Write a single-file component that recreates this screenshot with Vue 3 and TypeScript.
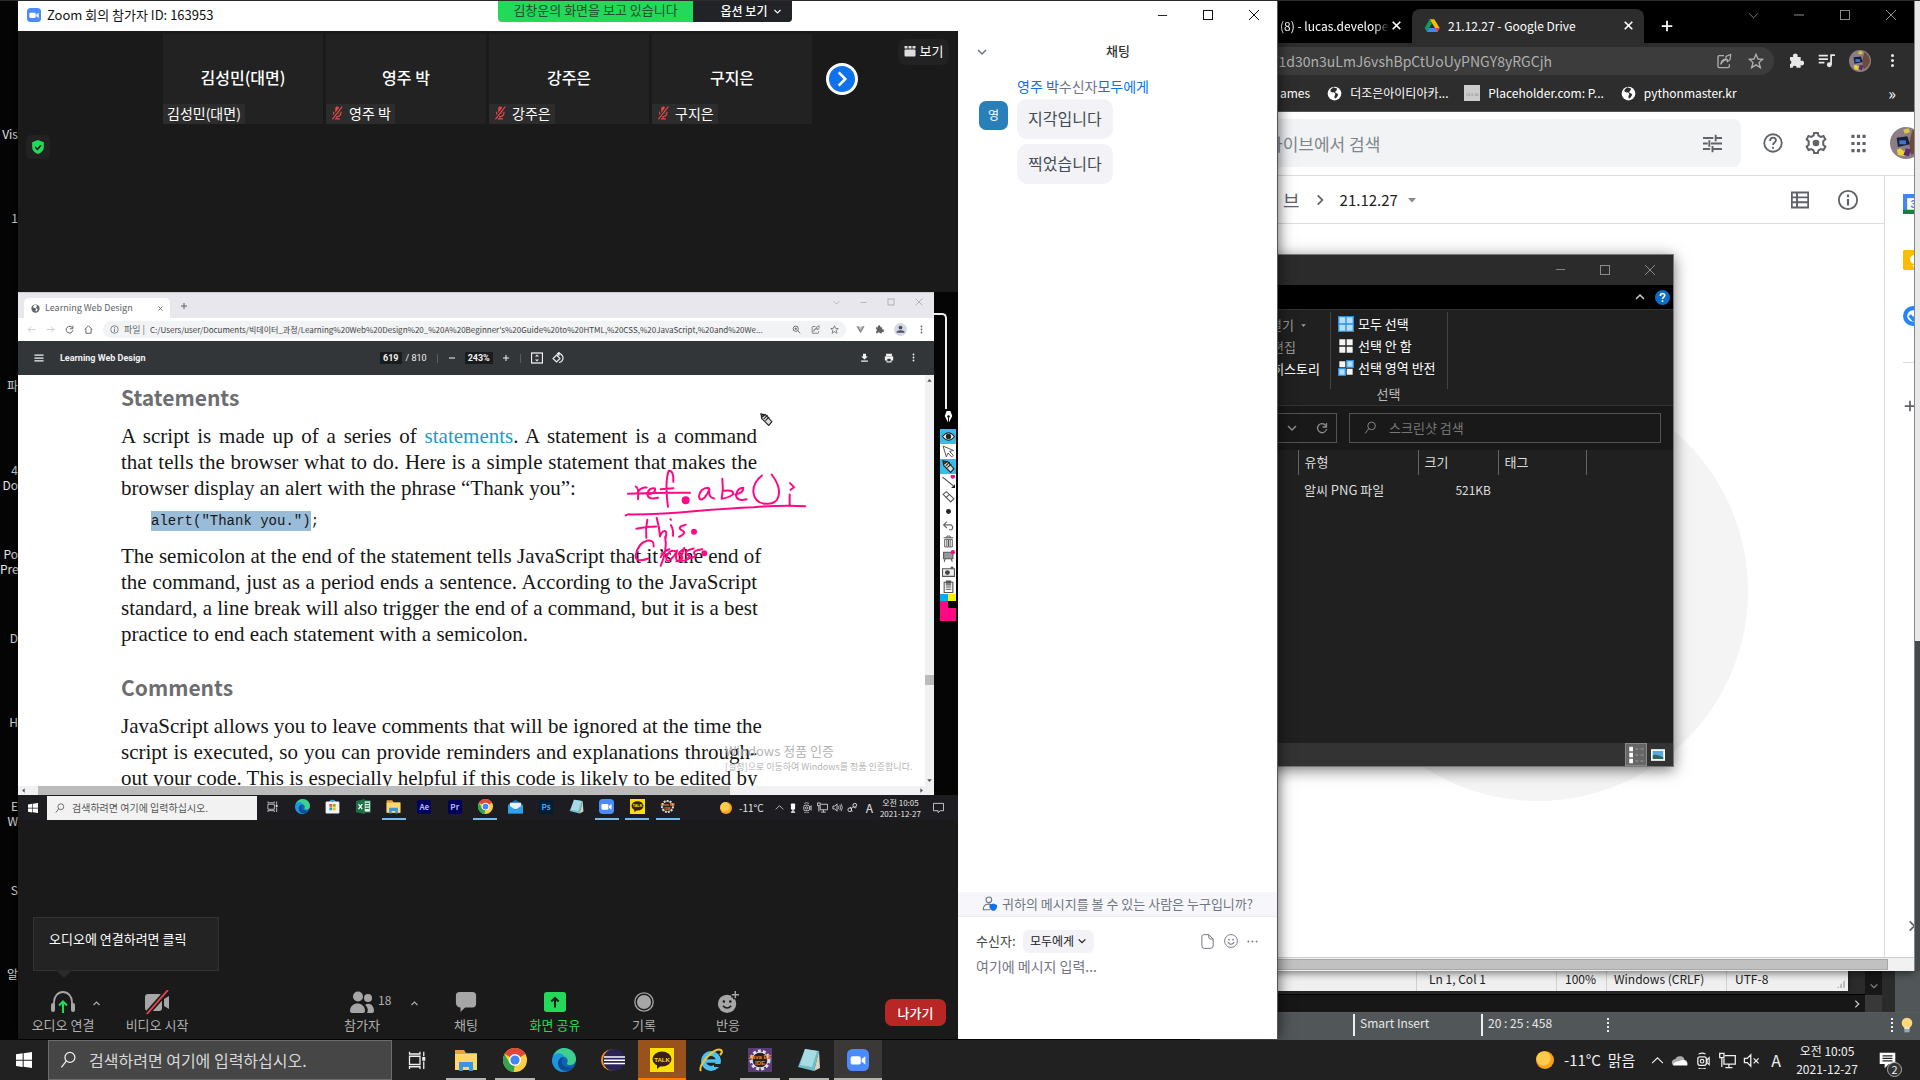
<script setup lang="ts">
import { h, type FunctionalComponent } from 'vue'

const chev = (d: string, w = 2) =>
  `<path d="${d}" fill="none" stroke="currentColor" stroke-width="${w}"/>`
const gear = '<circle cx="12" cy="12" r="7" fill="#222"/><circle cx="12" cy="12" r="9" fill="none" stroke="#ddd" stroke-width="3" stroke-dasharray="3 2"/><circle cx="12" cy="12" r="8" fill="none" stroke="#ddd" stroke-width="1"/>'

const glyphs: Record<string, string> = {
  zoom: '<rect width="24" height="24" rx="6" fill="#4a8cff"/><rect x="4" y="8" width="11" height="9" rx="2" fill="#fff"/><path d="M16 11l4-3v9l-4-3z" fill="#fff"/>',
  min: chev('M2 12h20'),
  max: '<rect x="3" y="3" width="18" height="18" fill="none" stroke="currentColor" stroke-width="2"/>',
  close: chev('M2 2l20 20M22 2L2 22'),
  x: chev('M5 5l14 14M19 5L5 19', 3),
  down: chev('M4 8l8 8 8-8', 3),
  up: chev('M4 16l8-8 8 8', 3),
  right: chev('M8 4l8 8-8 8', 3),
  thindown: chev('M2 7l10 10L22 7'),
  thinup: chev('M2 17l10-10 10 10'),
  caret: '<path d="M4 8h16l-8 9z" fill="currentColor"/>',
  caretup: '<path d="M4 16h16l-8-9z" fill="currentColor"/>',
  caretleft: '<path d="M16 4v16l-9-8z" fill="currentColor"/>',
  caretright: '<path d="M8 4v16l9-8z" fill="currentColor"/>',
  plus: chev('M12 3v18M3 12h18', 3),
  minus: chev('M3 12h18', 3),
  dots: '<circle cx="12" cy="4" r="2.4" fill="currentColor"/><circle cx="12" cy="12" r="2.4" fill="currentColor"/><circle cx="12" cy="20" r="2.4" fill="currentColor"/>',
  hdots: '<circle cx="3" cy="12" r="2" fill="currentColor"/><circle cx="12" cy="12" r="2" fill="currentColor"/><circle cx="21" cy="12" r="2" fill="currentColor"/>',
  muted: '<rect x="9" y="1" width="7" height="13" rx="3.500" fill="#e8474c"/><path d="M6 10q0 8 6.500 8t6.500-8M12 18v4M8 22h9" fill="none" stroke="#e8474c" stroke-width="2"/><path d="M20 1L4 23" stroke="#2b2b2b" stroke-width="5"/><path d="M21 1L4 23" stroke="#e8474c" stroke-width="2"/>',
  grid: '<path d="M1 2h6v5H1zM9 2h6v5H9zM17 2h6v5h-6z" fill="#ddd"/><rect x="1" y="9" width="22" height="14" rx="2" fill="#ddd"/>',
  shield: '<path d="M12 0l10 4v8c0 6-4 10-10 12C6 22 2 18 2 12V4z" fill="#23d959"/><path d="M7 12l4 4 6-7" fill="none" stroke="#1a1a1a" stroke-width="2.5"/>',
  globe: '<circle cx="12" cy="12" r="11" fill="currentColor"/><path d="M10 2c-2 3-6 3-4 7 3 2 6 0 7 3s-3 4 0 8c3-1 3-3 5-6-1-3-4-2-5-4 1-3 3-2 3-6z" fill="var(--hole,#fff)"/>',
  back: chev('M22 12H3M11 4l-8 8 8 8'),
  fwd: chev('M2 12h19M13 4l8 8-8 8'),
  reload: '<path d="M20 8a9 9 0 1 0 1 6M21 2v8h-8" fill="none" stroke="currentColor" stroke-width="2.6"/>',
  home: chev('M2 12L12 2l10 10M5 10v12h14V10', 2.5),
  info: '<circle cx="12" cy="12" r="10" fill="none" stroke="currentColor" stroke-width="2"/><path d="M12 11v7M12 6v3" stroke="currentColor" stroke-width="2.4"/>',
  search: '<circle cx="14" cy="9" r="7" fill="none" stroke="currentColor" stroke-width="1.8"/><path d="M9 14l-7 9" stroke="currentColor" stroke-width="1.8"/>',
  zoomin: '<circle cx="10" cy="10" r="7" fill="none" stroke="currentColor" stroke-width="2.4"/><path d="M15 15l7 7M10 7v6M7 10h6" stroke="currentColor" stroke-width="2.4"/>',
  share: '<path d="M12 4H5a2 2 0 0 0-2 2v14a2 2 0 0 0 2 2h13a2 2 0 0 0 2-2v-3" fill="none" stroke="currentColor" stroke-width="2"/><path d="M7 17c1-6 4-8 8-8V5l7-3v1l-1 7-4 3v-3c-4 0-7 2-10 7z" fill="none" stroke="currentColor" stroke-width="1.8"/>',
  star: '<path d="M12 2l3 7 7 .6-5.500 4.800L18.500 22 12 17.800 5.500 22l2-7.600L2 9.600 9 9z" fill="none" stroke="currentColor" stroke-width="2"/>',
  vue: '<path d="M1 3h5l6 10 6-10h5L12 22z" fill="#888"/><path d="M6 3h4l2 4 2-4h4l-6 10z" fill="#bbb"/>',
  puzzle: '<path d="M3 6h5a3.500 3.500 0 1 1 6 0h5v6a3.500 3.500 0 1 1 0 6v4h-6a3 3 0 0 0-6 0H3v-5a3.200 3.200 0 0 0 0-6z" fill="currentColor"/>',
  person: '<circle cx="12" cy="12" r="12" fill="#d5d8e0"/><circle cx="12" cy="8.500" r="3.500" fill="#4a5168"/><path d="M4.500 18c0-6 15-6 15 0z" fill="#4a5168"/>',
  menu: chev('M1 5h22M1 12h22M1 19h22', 3),
  fit: '<rect x="1" y="2" width="22" height="20" fill="none" stroke="currentColor" stroke-width="2.500"/><path d="M12 5l4 4H8zM12 19l4-4H8z" fill="currentColor"/>',
  rotate: '<path d="M9 6l7 7-7 7-7-7z M12 3a9 9 0 0 1 2 18M15 0l-4 3.500 4 3.500" fill="none" stroke="currentColor" stroke-width="2.400"/>',
  download: '<path d="M8 2h8v7h5l-9 8-9-8h5zM3 20h18v3H3z" fill="currentColor"/>',
  print: '<path d="M5 2h14v5H5zM2 8h20v10h-4v5H6v-5H2z" fill="currentColor"/><path d="M8 14h8v6H8z" fill="#323639"/>',
  win: '<path d="M0 3.500l10-1.500v9.500H0zM11.500 1.800L24 0v11.500H11.500zM0 13h10v9.500L0 21zM11.500 13H24v11l-12.500-1.800z" fill="#fff"/>',
  taskview: '<path d="M2 7h14v11H2zM2 1v3h14V1M2 24v-3h14v3M21 1v6M21 14v10" fill="none" stroke="currentColor" stroke-width="1.700"/><rect x="19" y="8" width="4" height="5" fill="currentColor"/>',
  edge: '<circle cx="12" cy="12" r="12" fill="#0c65b8"/><path d="M1 9C3 2 9 0 12 0c7 0 12 5 12 11 0 4-3 6-6 6-4 0-3-2-2.500-3 1-4-3-6-6-5.500S3 6 1 9z" fill="#3ccf8e"/><path d="M0 12C2 4 9 4 12 8c-5 2-6 10 3 15C6 26 0 19 0 12z" fill="#1a97e0"/><path d="M12 9c-5 4-1 13 9 10-5 6-15 5-15-4 0-3 2-6 6-6z" fill="#0b4c93"/>',
  store: '<path d="M8 5c0-4 8-4 8 0" fill="none" stroke="#38a7e8" stroke-width="2"/><rect x="1" y="4" width="22" height="19" rx="2" fill="#f3f3f3"/><path d="M7 8h4.500v4.500H7z" fill="#f25022"/><path d="M12.500 8H17v4.500h-4.500z" fill="#7fba00"/><path d="M7 13.500h4.500V18H7z" fill="#00a4ef"/><path d="M12.500 13.500H17V18h-4.500z" fill="#ffb900"/>',
  excel: '<path d="M11 3h12v18H11z" fill="#e9f5ee" stroke="#1d7044" stroke-width="1.500"/><path d="M15 7h6M15 11h6M15 15h6" stroke="#1d7044" stroke-width="2"/><path d="M0 3l14-3v24L0 21z" fill="#1d7044"/><path d="M4 8l6 8M10 8l-6 8" stroke="#fff" stroke-width="2"/>',
  folder: '<path d="M1 2h9l2 3h11v17H1z" fill="#e8a33d"/><path d="M1 6h22v16H1z" fill="#ffd869"/><path d="M5 23v-9h14v9h-4v-4H9v4z" fill="#3c96dc"/>',
  chrome: '<circle cx="12" cy="12" r="12" fill="#fdd044"/><path d="M12 12L1.600 6A12 12 0 0 1 22.400 6z" fill="#e2463a"/><path d="M1.600 6L7 16l5 .5L10.500 24A12 12 0 0 1 1.600 6z" fill="#31a350"/><circle cx="12" cy="12" r="6" fill="#fff"/><circle cx="12" cy="12" r="4.600" fill="#4285f4"/>',
  mail: '<path d="M0 9L12 1l12 8v14H0z" fill="#0f6fc5"/><path d="M3 6h18v10H3z" fill="#e6f3fc"/><path d="M0 9l12 8 12-8v14H0z" fill="#2ea2ea"/>',
  notepad: '<path d="M8 1l14 2-5 20L1 19z" fill="#6fbecb"/><path d="M8 1l12 2-5 16L3 17z" fill="#a8dce4"/><path d="M22 3l1 17-6 3z" fill="#d8d2c0"/>',
  talk: '<rect width="24" height="24" fill="#fae100"/><ellipse cx="12" cy="11" rx="9.500" ry="7.500" fill="#3b1e1e"/><path d="M7 15v6l5-4z" fill="#3b1e1e"/><text x="12" y="13.500" font-size="6" font-weight="700" text-anchor="middle" fill="#fae100" font-family="Liberation Sans, sans-serif">TALK</text>',
  javaee: `<rect width="24" height="24" fill="var(--tile,#5b3b7a)"/>${gear}<text x="12" y="11" font-size="6" font-weight="700" text-anchor="middle" fill="#f58220" font-family="Liberation Sans, sans-serif">Java EE</text><text x="12" y="17" font-size="6" font-weight="700" text-anchor="middle" fill="#f58220" font-family="Liberation Sans, sans-serif">IDE</text>`,
  eclipse: '<circle cx="10.500" cy="12" r="10.500" fill="#f7941e"/><circle cx="13" cy="12" r="11" fill="#2c2255"/><path d="M3 9h21M3 12.300h21M3 15.500h21" stroke="#fff" stroke-width="1.600"/>',
  ie: '<circle cx="12" cy="13" r="7.500" fill="none" stroke="#4cc1f0" stroke-width="5"/><path d="M7 13h14" stroke="#4cc1f0" stroke-width="3.500"/><path d="M15 16h9v3h-9z" fill="#222"/><path d="M2 23C-2 18 15-1 22 2c2 2 0 4-1 5" fill="none" stroke="#f3c52c" stroke-width="2"/>',
  sun: '<circle cx="12" cy="12" r="12" fill="#f9a11b"/><circle cx="10" cy="10" r="9.500" fill="#ffcb4d"/>',
  mic: '<rect x="7" y="1" width="10" height="15" rx="2" fill="#fff"/><path d="M12 16v7M7 22h10" stroke="#fff" stroke-width="3"/>',
  cam: '<rect x="4" y="7" width="12" height="12" rx="3" fill="none" stroke="currentColor" stroke-width="1.800"/><circle cx="10" cy="13" r="2.500" fill="none" stroke="currentColor" stroke-width="1.600"/><path d="M20 8l-3 3v4l3 3zM5 3q5-3 10 0M5 23q5 2 10 0" fill="none" stroke="currentColor" stroke-width="1.600"/>',
  net: '<path d="M8 5h15v12H7V9M14 17v5M9 22h10" fill="none" stroke="currentColor" stroke-width="1.800"/><path d="M1 2h6v6H1zM4 8v13" fill="none" stroke="currentColor" stroke-width="1.800"/>',
  vol: '<path d="M2 9h4l5-5v16l-5-5H2z" fill="none" stroke="currentColor" stroke-width="1.800"/><path d="M14 9q2 3 0 6M17 6q4 6 0 12M20 4q5 8 0 16" fill="none" stroke="currentColor" stroke-width="1.600"/>',
  volx: '<path d="M2 9h4l5-5v16l-5-5H2zM15 9l7 7M22 9l-7 7" fill="none" stroke="currentColor" stroke-width="1.800"/>',
  link: '<circle cx="6" cy="17" r="4" fill="none" stroke="currentColor" stroke-width="2"/><circle cx="17" cy="7" r="4" fill="none" stroke="currentColor" stroke-width="2"/><path d="M6 12c8-2 0 10 6 8M10 14c4-8 8 2 10-2" fill="none" stroke="currentColor" stroke-width="2"/>',
  cloud: '<path d="M2 18q-3-6 4-8 2-5 8-4 4 0 5 5 5 1 4 7z" fill="#aaa"/><path d="M3 19q0-5 7-6l7-2q7 2 6 8z" fill="#fff"/>',
  note: '<path d="M1 3h22v16h-7l-5 4v-4H1z" fill="none" stroke="currentColor" stroke-width="1.800"/>',
  notefull: '<path d="M1 1h22v16h-9l-6 6v-6H1z" fill="#fff"/><path d="M5 5.500h14M5 9h14M5 12.500h14" stroke="#202020" stroke-width="1.500"/>',
  headset: '<path d="M3 16V12a9 10 0 0 1 18 0v4" fill="none" stroke="#a6a6a6" stroke-width="1.800"/><rect x="0" y="13" width="4" height="9" rx="2" fill="#a6a6a6"/><rect x="20" y="13" width="4" height="9" rx="2" fill="#a6a6a6"/><path d="M12 23V12M8 15.500l4-4 4 4" fill="none" stroke="#23d959" stroke-width="2"/>',
  video: '<rect x="0" y="4" width="17" height="17" rx="3" fill="#a6a6a6"/><path d="M19 9l5-3v13l-5-3z" fill="#a6a6a6"/><path d="M23 0L1 25" stroke="#1a1a1a" stroke-width="5"/><path d="M23 0L1 25" stroke="#e8474c" stroke-width="1.800"/>',
  people: '<circle cx="8" cy="6.500" r="5" fill="#a6a6a6"/><path d="M0 21c0-10 15-10 15 0q0 2-2 2H2q-2 0-2-2z" fill="#a6a6a6"/><circle cx="18" cy="8" r="4" fill="#a6a6a6"/><path d="M17 23c2-3 0-7-2-8 4-3 9 0 9 6q0 2-2 2z" fill="#a6a6a6"/>',
  chat: '<path d="M5 1h14q4 0 4 4v9q0 4-4 4h-8l-5 5v-5q-4 0-5-4V5q0-4 4-4z" fill="#a6a6a6"/>',
  sharescr: '<rect width="24" height="22" y="1" rx="3" fill="#23d959"/><path d="M12 18V8M8 11.500l4-4 4 4" fill="none" stroke="#1a1a1a" stroke-width="2.200"/>',
  record: '<circle cx="12" cy="12" r="11" fill="none" stroke="#a6a6a6" stroke-width="1.600"/><circle cx="12" cy="12" r="8.500" fill="#a6a6a6"/>',
  react: '<circle cx="11" cy="14" r="10" fill="#a6a6a6"/><circle cx="7.500" cy="11.500" r="1.400" fill="#1a1a1a"/><circle cx="14.500" cy="11.500" r="1.400" fill="#1a1a1a"/><path d="M6.500 16q4.500 5 9 0" fill="none" stroke="#1a1a1a" stroke-width="1.600"/><path d="M20 0v9M15.500 4.500h9" stroke="#1a1a1a" stroke-width="5"/><path d="M20 0v8M16 4h8" stroke="#a6a6a6" stroke-width="1.600"/>',
  whosees: '<circle cx="11" cy="6" r="4.500" fill="none" stroke="#6e7680" stroke-width="1.800"/><path d="M13 22H2q0-9 8-9 4 0 6 2" fill="none" stroke="#6e7680" stroke-width="1.800"/><path d="M18 12l6 2.500v4q-1 4-6 5.500-5-1.500-6-5.500v-4z" fill="#0e72ed"/>',
  file: '<path d="M6 1h8l7 7v11q0 4-4 4H7q-4 0-4-4V5q0-4 3-4zM14 1v4q0 3 3 3h4" fill="none" stroke="currentColor" stroke-width="1.600"/>',
  smile: '<circle cx="12" cy="12" r="11" fill="none" stroke="currentColor" stroke-width="1.600"/><circle cx="8.500" cy="9.500" r="1.500" fill="currentColor"/><circle cx="15.500" cy="9.500" r="1.500" fill="currentColor"/><path d="M6.500 14q5.500 7 11 0" fill="none" stroke="currentColor" stroke-width="1.800"/>',
  drive: '<path d="M8.500 2h7l8 13h-7z" fill="#fbbc04"/><path d="M8.500 2L1 15l3.500 6L12 8z" fill="#0f9d58"/><path d="M4.500 21L8 15h15.500L20 21z" fill="#4285f4"/><path d="M17 15h6.500L20 21z" fill="#ea4335"/>',
  playlist: '<path d="M1 5h13M1 10h13M1 15h8" stroke="currentColor" stroke-width="2.400"/><circle cx="16" cy="18" r="3.500" fill="currentColor"/><path d="M18.500 18V4.500H24" fill="none" stroke="currentColor" stroke-width="2.400"/>',
  photo: '<circle cx="12" cy="12" r="12" fill="#8c7d86"/><path d="M17 2q5 4 6 10-2 7-7 9-3-8 1-19z" fill="#6d4b38"/><path d="M5 8l8-1 2 6-9 2z" fill="#16223c"/><path d="M7 10h5v3H7z" fill="#3f76c9"/><path d="M5 17l3-1 2 2 3-1-2 5-5-1z" fill="#e6d43c"/><path d="M10 2l4-1 1 3-4 1z" fill="#d9c940"/><path d="M12 16l4 1-2 5-4-1z" fill="#5a2c74"/>',
  tune: '<path d="M0 5h13M17 5h7M16 1v8M0 12h6M10 12h14M8 8v8M0 19h9M13 19h11M12 15v8" stroke="currentColor" stroke-width="2.400"/>',
  help: '<circle cx="12" cy="12" r="10.500" fill="none" stroke="currentColor" stroke-width="2.200"/><path d="M8.500 9.500q0-4 3.500-4t3.500 3.300c0 2.500-3.500 2.700-3.500 5.700M12 16.500v2.500" fill="none" stroke="currentColor" stroke-width="2.200"/>',
  gear: '<path d="M10 1h4l.7 3 2.500 1.400 3-1 2 3.500-2.300 2.100v4l2.300 2.100-2 3.500-3-1-2.500 1.400-.7 3h-4l-.7-3-2.500-1.400-3 1-2-3.500L4 14v-4L1.800 7.900l2-3.500 3 1L9.300 4z" fill="none" stroke="currentColor" stroke-width="2.200"/><circle cx="12" cy="12" r="3.600" fill="currentColor"/>',
  apps: '<path d="M3 1h4v4H3zM10 1h4v4h-4zM17 1h4v4h-4zM3 10h4v4H3zM10 10h4v4h-4zM17 10h4v4h-4zM3 19h4v4H3zM10 19h4v4h-4zM17 19h4v4h-4z" fill="currentColor"/>',
  list: '<path d="M1 2h22v20H1zM1 8.500h22M1 15h22M8 2v20" fill="none" stroke="currentColor" stroke-width="2.600"/>',
  calendar: '<path d="M0 0h24v24H0z" fill="#4285f4"/><path d="M5 5h16v14H5z" fill="#fff"/><path d="M0 19h24v5H0z" fill="#188038"/><text x="9" y="17" font-size="12" font-weight="700" fill="#4285f4" font-family="Roboto, sans-serif">31</text>',
  keep: '<rect width="24" height="24" rx="2" fill="#fbbc04"/><circle cx="14" cy="11" r="5.500" fill="#fff"/><path d="M12 18h5v2h-5z" fill="#fff"/>',
  tasks: '<circle cx="12" cy="12" r="9.500" fill="none" stroke="#2684fc" stroke-width="5"/><path d="M8 11l4 5 9-9" fill="none" stroke="#2684fc" stroke-width="4"/>',
  qmark: '<circle cx="12" cy="12" r="12" fill="#0b6cc9"/><path d="M8.500 9.500q0-4 3.500-4t3.500 3.300c0 2.500-3.500 2.700-3.500 5.700M12 16.500v2.800" fill="none" stroke="#fff" stroke-width="2.600"/>',
  selall: '<path d="M0 0h24v24H0z" fill="#2a8de0"/><path d="M2 2h9v9H2zM13 2h9v9h-9zM2 13h9v9H2zM13 13h9v9h-9z" fill="#b5dfff"/>',
  selnone: '<path d="M2 2h9v9H2zM13 2h9v9h-9zM2 13h9v9H2zM13 13h9v9h-9z" fill="#f4f4f4"/>',
  selinv: '<path d="M12 0h12v12H12zM0 12h12v12H0z" fill="#2a8de0"/><path d="M2 2h9v9H2zM13 13h9v9h-9z" fill="#f4f4f4"/><path d="M14 2h8v8h-8zM2 14h8v8H2z" fill="#b5dfff"/>',
  details: '<path d="M3 1h5v6H3zM3 9h5v6H3zM3 17h5v6H3z" fill="#fff"/><path d="M11 4h4M18 4h4M11 12h4M18 12h4M11 20h4M18 20h4" stroke="#999" stroke-width="1.500"/>',
  thumbs: '<path d="M0 2h24v20H0z" fill="#fff"/><path d="M3 5h18v14H3z" fill="#5aa7e6"/><path d="M3 12q8-2 18 4v3H3z" fill="#2e6b58"/>',
  bulb: '<circle cx="12" cy="9" r="8" fill="#ffd87a"/><path d="M8 15h8v3H8z" fill="#f7e6b0"/><path d="M8 18h8v5H8z" fill="#8fa9c4"/>',
  pen: '<circle cx="12" cy="12" r="12" fill="#000"/><path d="M12 23L6 11l3-8h6l3 8z" fill="#fff"/><path d="M12 23v-9" stroke="#000" stroke-width="1.500"/><circle cx="12" cy="12" r="2" fill="#000"/>',
  eye: '<path d="M1 12q11-14 22 0-11 14-22 0z" fill="#fff" stroke="#222" stroke-width="2"/><circle cx="12" cy="12" r="5" fill="#222"/>',
  arrow: '<path d="M2 2l19 8-7 2 7 7-3 3-7-7-3 7z" fill="#fff" stroke="#555" stroke-width="1.800"/>',
  pencil: '<path d="M2 2l8 1 12 13-6 7L3 10z" fill="#ddd" stroke="#222" stroke-width="2"/><path d="M2 2l3 5 3-3zM7 11l7-7M10 14l7-7" fill="none" stroke="#222" stroke-width="2"/>',
  line: '<path d="M1 4l20 16" stroke="#444" stroke-width="2"/><circle cx="20" cy="3" r="4" fill="#ff0a84"/><path d="M24 17v7h-7z" fill="#222"/>',
  eraser: '<path d="M2 8l6-5 14 13-6 6z" fill="#fff" stroke="#555" stroke-width="2"/><path d="M7 14l7-6" stroke="#555" stroke-width="2"/>',
  dot: '<circle cx="12" cy="12" r="4.500" fill="#222"/>',
  undo: '<path d="M9 3L3 9l6 6M3 9h14q5 4 1 9h-5" fill="none" stroke="#666" stroke-width="2.200"/>',
  trash: '<path d="M3 5h18M9 5V2h6v3M5 8h14v14H5zM9 9v12M12 9v12M15 9v12" fill="none" stroke="#555" stroke-width="1.800"/>',
  board: '<path d="M3 4h17v12H3zM6 16l-2 6M17 16l2 6" fill="#999" stroke="#555" stroke-width="2"/><circle cx="20" cy="4" r="4" fill="#ff0a84"/>',
  camera: '<path d="M1 7h22v14H1z" fill="#eee" stroke="#555" stroke-width="2"/><circle cx="10" cy="14" r="4.500" fill="#444"/><path d="M16 3h5v4h-5z" fill="#555"/>',
  clip: '<path d="M4 4h16v19H4zM7 9h10M7 13h10M7 17h10M8 2h8v4H8z" fill="none" stroke="#555" stroke-width="2"/>',
}

const Icon: FunctionalComponent<{ n: string; s?: number; t?: number }> = (p) =>
  h('svg', {
    viewBox: '0 0 24 24',
    width: p.s ?? 16,
    height: p.t ?? p.s ?? 16,
    class: 'icon',
    'aria-hidden': 'true',
    innerHTML: glyphs[p.n],
  })
Icon.props = ['n', 's', 't']

const desktopLabels = ['Vis', '1', '', '파', '4\nDo', 'Po\nPre', 'D', 'H', 'E\nW', 'S', '알']

const participants = [
  { name: '김성민(대면)', muted: false },
  { name: '영주 박', muted: true },
  { name: '강주은', muted: true },
  { name: '구지은', muted: true },
]

const innerApps = [
  { n: 'taskview' }, { n: 'edge' }, { n: 'store' }, { n: 'excel' }, { n: 'folder', on: true },
  { n: '', label: 'Ae', c: 'ae' }, { n: '', label: 'Pr', c: 'ae' }, { n: 'chrome', on: true },
  { n: 'mail' }, { n: '', label: 'Ps', c: 'ps' }, { n: 'notepad' }, { n: 'zoom', on: true },
  { n: 'talk', on: true }, { n: 'javaee', on: true },
] as { n: string; label?: string; c?: string; on?: boolean }[]

const apps = [
  { n: 'taskview', s: 18, title: '작업 보기' },
  { n: 'folder', s: 24, on: true, title: '파일 탐색기' },
  { n: 'chrome', s: 24, on: true, title: 'Chrome' },
  { n: 'edge', s: 24, title: 'Edge' },
  { n: 'eclipse', s: 24, title: 'Eclipse' },
  { n: 'talk', s: 24, c: 'alert', title: '카카오톡' },
  { n: 'ie', s: 24, title: 'Internet Explorer' },
  { n: 'javaee', s: 24, on: true, title: 'Java EE IDE' },
  { n: 'notepad', s: 24, on: true, title: '메모장' },
  { n: 'zoom', s: 22, c: 'active', title: 'Zoom' },
] as { n: string; s: number; title: string; on?: boolean; c?: string }[]

const inkTools = ['eye', 'arrow', 'pencil', 'line', 'eraser', 'dot', 'undo', 'trash', 'board', 'camera', 'clip']
</script>

<template>
  <div class="desktop">
    <main class="workspace">
      <ul class="labels">
        <li v-for="(l, i) in desktopLabels" :key="i">{{ l }}</li>
      </ul>

      <!-- Eclipse, furthest back -->
      <section class="win eclipse">
        <div class="ecl-editor">
          <div class="ecl-canvas"></div>
          <div class="ecl-v"><Icon n="down" :s="10" /></div>
          <div class="ecl-gap"></div>
        </div>
        <div class="ecl-h">
          <div class="ecl-track"><Icon n="right" :s="10" /></div>
          <div class="ecl-corner"></div>
          <div class="ecl-gap"></div>
        </div>
        <footer class="ecl-status">
          <span class="ecl-cell a">Smart Insert</span>
          <span class="ecl-cell b">20 : 25 : 458</span>
          <span class="grip"></span>
          <span class="grip end"></span>
          <Icon n="bulb" :s="16" />
        </footer>
      </section>

      <section class="win notepad">
        <span class="np a">Ln 1, Col 1</span>
        <span class="np b">100%</span>
        <span class="np c">Windows (CRLF)</span>
        <span class="np d">UTF-8</span>
        <i class="resize"></i>
      </section>

      <!-- Chrome with Google Drive -->
      <section class="win chrome">
        <div class="tabs">
          <div class="tab old"><span>(8) - lucas.develope</span><Icon n="x" :s="13" /></div>
          <div class="tab on"><Icon n="drive" :s="16" /><span>21.12.27 - Google Drive</span><Icon n="x" :s="13" /></div>
          <button class="bare newtab" aria-label="새 탭"><Icon n="plus" :s="14" /></button>
          <div class="ctl dim"><Icon n="thindown" :s="11" /><Icon n="min" :s="12" /><Icon n="max" :s="12" /><Icon n="close" :s="12" /></div>
        </div>
        <div class="omni">
          <div class="pill"><span>/1d30n3uLmJ6vshBpCtUoUyPNGY8yRGCjh</span><Icon n="share" :s="16" /><Icon n="star" :s="16" /></div>
          <Icon n="puzzle" :s="16" /><Icon n="playlist" :s="17" /><Icon n="photo" :s="22" /><Icon n="dots" :s="15" />
        </div>
        <nav class="marks">
          <a href="#" class="m0">ames</a>
          <a href="#" class="m1"><Icon n="globe" :s="15" />더조은아이티아카...</a>
          <a href="#" class="m2"><i class="ph">16 x 16</i>Placeholder.com: P...</a>
          <a href="#" class="m3"><Icon n="globe" :s="15" />pythonmaster.kr</a>
          <span class="more">»</span>
        </nav>
        <div class="drive">
          <div class="d-head">
            <div class="d-search"><input type="text" placeholder="라이브에서 검색" aria-label="드라이브에서 검색" /><Icon n="tune" :s="19" /></div>
            <Icon n="help" :s="20" /><Icon n="gear" :s="22" /><Icon n="apps" :s="19" />
            <Icon n="photo" :s="32" class="me" />
          </div>
          <div class="d-body">
            <div class="d-main">
              <div class="crumbs">
                <span class="c0">브</span><Icon n="right" :s="14" class="sep" />
                <span class="c1">21.12.27</span><Icon n="caret" :s="12" class="car" />
                <Icon n="list" :s="18" class="lst" /><Icon n="info" :s="22" />
              </div>
              <div class="d-canvas"><div class="blob"></div></div>
            </div>
            <aside class="side">
              <Icon n="calendar" :s="20" /><Icon n="keep" :s="20" /><Icon n="tasks" :s="20" />
              <hr /><Icon n="plus" :s="14" /><Icon n="right" :s="14" class="hide" />
            </aside>
          </div>
          <div class="hbar"><i></i></div>
        </div>
      </section>
      <div class="edge-strip"></div>

      <!-- File explorer -->
      <section class="win explorer">
        <div class="x-title"><div class="ctl dim"><Icon n="min" :s="11" /><Icon n="max" :s="12" /><Icon n="close" :s="12" /></div></div>
        <div class="x-menu"><Icon n="up" :s="12" /><Icon n="qmark" :s="15" /></div>
        <div class="x-ribbon">
          <div class="x-col open"><span class="off">열기 <Icon n="caret" :s="7" /></span><span class="off">편집</span><span>히스토리</span></div>
          <div class="x-col sel">
            <button class="bare"><Icon n="selall" :s="16" />모두 선택</button>
            <button class="bare"><Icon n="selnone" :s="16" />선택 안 함</button>
            <button class="bare"><Icon n="selinv" :s="16" />선택 영역 반전</button>
            <em>선택</em>
          </div>
        </div>
        <div class="x-addr">
          <div class="x-path"><Icon n="down" :s="12" /><Icon n="reload" :s="12" /></div>
          <label class="x-search"><Icon n="search" :s="13" /><input type="text" placeholder="스크린샷 검색" /></label>
        </div>
        <table class="x-table">
          <thead><tr><th class="t0"></th><th class="t1">유형</th><th class="t2">크기</th><th class="t3">태그</th><th></th></tr></thead>
          <tbody><tr><td></td><td>알씨 PNG 파일</td><td class="num">521KB</td><td></td><td></td></tr></tbody>
        </table>
        <div class="x-status"><span class="on"><Icon n="details" :s="18" /></span><span><Icon n="thumbs" :s="14" /></span></div>
      </section>

      <!-- Zoom -->
      <section class="win zoom">
        <header class="z-title">
          <Icon n="zoom" :s="14" /><span>Zoom 회의 참가자 ID: 163953</span>
          <div class="ctl"><Icon n="min" :s="11" /><Icon n="max" :s="12" /><Icon n="close" :s="12" /></div>
        </header>
        <div class="z-body">
          <div class="meeting">
            <div class="gallery">
              <div v-for="p in participants" :key="p.name" class="tile">
                <strong>{{ p.name }}</strong>
                <span class="tag"><Icon v-if="p.muted" n="muted" :s="14" />{{ p.name }}</span>
              </div>
              <button class="next" aria-label="다음"><Icon n="right" :s="20" /></button>
            </div>
            <button class="view"><Icon n="grid" :s="12" />보기</button>
            <div class="secure"><Icon n="shield" :s="14" /></div>

            <div class="share">
              <div class="s-top">
                <div class="browser">
                  <div class="b-tabs">
                    <div class="b-tab"><Icon n="globe" :s="9" /><span>Learning Web Design</span><Icon n="x" :s="7" /></div>
                    <Icon n="plus" :s="8" />
                    <div class="ctl"><Icon n="thindown" :s="7" /><Icon n="min" :s="7" /><Icon n="max" :s="8" /><Icon n="close" :s="8" /></div>
                  </div>
                  <div class="b-omni">
                    <Icon n="back" :s="9" class="pale" /><Icon n="fwd" :s="9" class="pale" /><Icon n="reload" :s="9" /><Icon n="home" :s="9" />
                    <div class="b-pill"><Icon n="info" :s="9" /><span class="kind">파일 |</span><span class="url">C:/Users/user/Documents/빅데이터_과정/Learning%20Web%20Design%20_%20A%20Beginner's%20Guide%20to%20HTML,%20CSS,%20JavaScript,%20and%20We...</span><Icon n="zoomin" :s="9" /><Icon n="share" :s="9" /><Icon n="star" :s="9" /></div>
                    <Icon n="vue" :s="9" /><Icon n="puzzle" :s="9" /><Icon n="person" :s="13" /><Icon n="dots" :s="9" />
                  </div>
                  <div class="pdfbar">
                    <div class="pl"><Icon n="menu" :s="10" /><b>Learning Web Design</b></div>
                    <div class="pc"><span class="box">619</span><span>/ 810</span><i></i><Icon n="minus" :s="8" /><span class="box">243%</span><Icon n="plus" :s="8" /><i></i><Icon n="fit" :s="12" /><Icon n="rotate" :s="12" /></div>
                    <div class="pr"><Icon n="download" :s="9" /><Icon n="print" :s="10" /><Icon n="dots" :s="9" /></div>
                  </div>
                  <div class="page">
                    <article>
                      <h2>Statements</h2>
                      <p class="j">A script is made up of a series of <a href="#">statements</a>. A statement is a command</p>
                      <p class="j">that tells the browser what to do. Here is a simple statement that makes the</p>
                      <p>browser display an alert with the phrase “Thank you”:</p>
                      <pre><mark>alert("Thank you.")</mark>;</pre>
                      <p class="j">The semicolon at the end of the statement tells JavaScript that it’s the end of</p>
                      <p class="j">the command, just as a period ends a sentence. According to the JavaScript</p>
                      <p class="j">standard, a line break will also trigger the end of a command, but it is a best</p>
                      <p>practice to end each statement with a semicolon.</p>
                      <h2 class="second">Comments</h2>
                      <p class="j">JavaScript allows you to leave comments that will be ignored at the time the</p>
                      <p class="j">script is executed, so you can provide reminders and explanations through-</p>
                      <p class="j">out your code. This is especially helpful if this code is likely to be edited by</p>
                    </article>
                    <div class="vbar"><Icon n="caretup" :s="7" /><i></i><Icon n="caret" :s="7" /></div>
                    <div class="watermark"><b>Windows 정품 인증</b><span>[설정]으로 이동하여 Windows를 정품 인증합니다.</span></div>
                    <svg class="ink" viewBox="190 530 555 305" width="185" height="102" fill="none" stroke="#ff0a84" stroke-width="6" stroke-linecap="round" stroke-linejoin="round">
                      <path d="M205 610q90-4 186-3M228 588q10 2 7 38M235 604q8-14 26-13M264 612q26-5 22-18-18-4-23 16 2 20 32 12M341 574q2-34-14-33-12 35-2 108M303 596l38-3" />
                      <path d="M446 592q-24 1-28 25 2 18 17 4 10-10 14-26-4 26 14 29M488 565q4 30-2 60 24-4 34-14 4-14-28-10M527 612q24-4 24-20-18 0-22 22 2 20 32 12" />
                      <path d="M607 555q-27 20-26 50 4 32 34 35M636 552q34 45 16 76-12 14-36 11M691 578l12 12-10 8M690 612v32M198 675q8-6 14-3 110-1 190-10 110-9 180-12 80-6 155-3" />
                      <path d="M230 715q30-7 60-7M263 688q-6 26-3 54M291 682q8 26 10 56 6-18 16-16 6 4 0 20M334 704q8 14 6 32M332 686l2 2M378 703q-28 7-12 16 18 8-8 20" />
                      <path d="M282 768q2-20-18-18-30 8-36 46 0 22 38 8M317 738q6 44-14 88M303 800q10-20 26-24M348 782q-22-6-28 20-2 14 12 6 14-12 20-28-6 22 0 30M374 772l-14 40M372 776q-24 14-8 20 12 8-10 16M402 774q-32 8-20 18 18 8-6 18l-26 2M428 776q-30 4-24 14 12 10-22 14" />
                      <g fill="#ff0a84" stroke="none"><circle cx="378" cy="629" r="12" /><circle cx="403" cy="724" r="9" /><circle cx="434" cy="788" r="9" /></g>
                    </svg>
                    <Icon n="pencil" :s="13" class="cursor" />
                  </div>
                  <div class="b-h"><Icon n="caretleft" :s="7" /><i></i><Icon n="caretright" :s="7" /></div>
                </div>
                <div class="inkcol">
                  <div class="bracket"></div>
                  <Icon n="pen" :s="15" class="nib" />
                  <div class="tools">
                    <span v-for="t in inkTools" :key="t" :class="{ lit: t === 'eye' || t === 'pencil' }"><Icon :n="t" :s="13" /></span>
                    <div class="palette"><i class="cy"></i><i class="ye"></i><i></i><i class="bk"></i></div>
                  </div>
                </div>
              </div>
              <div class="s-task">
                <Icon n="win" :s="10" class="start" />
                <label class="s-search"><Icon n="search" :s="10" /><input type="text" placeholder="검색하려면 여기에 입력하십시오." /></label>
                <div class="s-apps">
                  <span v-for="(a, i) in innerApps" :key="i" :class="{ on: a.on }">
                    <Icon v-if="a.n" :n="a.n" :s="a.n === 'taskview' ? 11 : 15" />
                    <b v-else :class="a.c">{{ a.label }}</b>
                  </span>
                </div>
                <div class="s-tray">
                  <Icon n="sun" :s="12" /><span class="deg">-11°C</span>
                  <Icon n="thinup" :s="9" /><Icon n="mic" :s="10" /><Icon n="cam" :s="11" /><Icon n="net" :s="11" /><Icon n="vol" :s="11" /><Icon n="link" :s="11" /><span class="ime">A</span>
                  <time>오전 10:05<br />2021-12-27</time><Icon n="note" :s="11" class="nt" />
                </div>
              </div>
            </div>

            <div class="tip">오디오에 연결하려면 클릭</div>
            <div class="controls">
              <button class="w70"><span class="ic"><Icon n="headset" :s="24" /><Icon n="up" :s="9" class="cu" /></span>오디오 연결</button>
              <button class="w80"><span class="ic"><Icon n="video" :s="24" /></span>비디오 시작</button>
              <div class="mid">
                <button class="w100"><span class="ic"><Icon n="people" :s="24" /><sup>18</sup><Icon n="up" :s="9" class="cu far" /></span>참가자</button>
                <button class="w60"><span class="ic"><Icon n="chat" :s="22" /></span>채팅</button>
                <button class="w70 green"><span class="ic"><Icon n="sharescr" :s="24" :t="22" /></span>화면 공유</button>
                <button class="w60"><span class="ic"><Icon n="record" :s="20" /></span>기록</button>
                <button class="w60"><span class="ic"><Icon n="react" :s="22" /></span>반응</button>
              </div>
              <button class="leave">나가기</button>
            </div>
          </div>

          <aside class="chat">
            <div class="c-head"><Icon n="down" :s="12" /><h1>채팅</h1></div>
            <div class="c-msgs">
              <div class="from"><b>영주 박</b>수신자<b>모두에게</b></div>
              <div class="msg"><span class="av">영</span><p>지각입니다</p></div>
              <div class="msg"><span class="av none"></span><p>찍었습니다</p></div>
            </div>
            <div class="who"><Icon n="whosees" :s="15" />귀하의 메시지를 볼 수 있는 사람은 누구입니까?</div>
            <div class="to">
              <label for="to">수신자:</label>
              <span class="selwrap"><select id="to"><option>모두에게</option></select><Icon n="down" :s="10" /></span>
              <div class="c-ic"><Icon n="file" :s="15" /><Icon n="smile" :s="14" /><Icon n="hdots" :s="11" /></div>
            </div>
            <textarea placeholder="여기에 메시지 입력..." aria-label="메시지"></textarea>
          </aside>
        </div>
      </section>
      <div class="banner"><span>김창운의 화면을 보고 있습니다</span><button>옵션 보기 <Icon n="down" :s="9" /></button></div>
    </main>

    <footer class="taskbar">
      <button class="bare startbtn" aria-label="시작"><Icon n="win" :s="16" /></button>
      <label class="t-search"><Icon n="search" :s="17" /><input type="text" placeholder="검색하려면 여기에 입력하십시오." /></label>
      <div class="t-apps">
        <button v-for="a in apps" :key="a.title" :class="['app', a.c, { on: a.on }]" :aria-label="a.title"><Icon :n="a.n" :s="a.s" /></button>
      </div>
      <div class="tray">
        <Icon n="sun" :s="18" /><span class="deg">-11°C&nbsp; 맑음</span>
        <Icon n="thinup" :s="13" /><Icon n="cloud" :s="17" /><Icon n="cam" :s="17" /><Icon n="net" :s="17" /><Icon n="volx" :s="17" /><span class="ime">A</span>
        <time>오전 10:05<br />2021-12-27</time>
        <span class="notes"><Icon n="notefull" :s="17" /><i>2</i></span>
      </div>
    </footer>
  </div>
</template>

<style>
html, body { margin: 0; height: 100%; overflow: hidden; background: #050505; }
</style>

<style scoped>
* { box-sizing: border-box; }
.desktop { height: 100vh; display: flex; flex-direction: column; overflow: hidden; font-family: "Noto Sans CJK KR", "Noto Sans", sans-serif; font-size: 12px; line-height: 16px; color: #222; background: #050505; }
.workspace { flex: 1; position: relative; overflow: hidden; border-top: 1px solid #2b2b2b; }
.icon { flex: none; display: block; }
button, input, select, textarea { font: inherit; color: inherit; background: none; border: 0; padding: 0; margin: 0; outline: 0; }
input { min-width: 0; }
a { color: inherit; text-decoration: none; }
.win { position: absolute; overflow: hidden; display: flex; flex-direction: column; }
.bare { display: flex; align-items: center; }
.ctl { display: flex; align-items: center; margin-left: auto; gap: 33px; color: #111; }
.dim { color: #8a8a8a; }

.labels { list-style: none; margin: 0; padding: 125px 0 0; width: 18px; color: #eee; }
.labels li { height: 84px; line-height: 15px; white-space: pre; text-align: right; }

/* Eclipse */
.eclipse { left: 1200px; right: 0; top: 0; bottom: 0; background: #515658; }
.ecl-editor { flex: 1; display: flex; }
.ecl-canvas { flex: 1; background: #2b2b2b; border-bottom: 1px solid #000; }
.ecl-v { width: 17px; background: #171717; color: #888; display: flex; align-items: flex-end; justify-content: center; padding-bottom: 4px; }
.ecl-gap { width: 38px; border-left: 13px solid #2b2b2b; }
.ecl-h { height: 17px; display: flex; }
.ecl-track { flex: 1; background: #171717; color: #ccc; display: flex; align-items: center; justify-content: flex-end; padding-right: 3px; }
.ecl-corner { width: 17px; background: #383838; }
.ecl-status { height: 28px; padding: 1px 5px 4px 153px; display: flex; align-items: center; color: #e8e8e8; border-top: 1px solid #5a5a5a; }
.ecl-cell { border-left: 2px solid #eee; height: 22px; line-height: 18px; padding-left: 5px; }
.ecl-cell.a { width: 128px; }
.ecl-cell.b { width: 126px; }
.grip { width: 2px; height: 14px; background: repeating-linear-gradient(#eee 0 2px, transparent 2px 4px); }
.grip.end { margin-left: auto; margin-right: 6px; }

/* Notepad status bar */
.notepad { left: 1200px; right: 72px; bottom: 49px; height: 60px; background: #f0f0f0; flex-direction: row; align-items: flex-end; padding-left: 216px; box-shadow: 0 0 6px #0006; }
.np { border-left: 1px solid #d0d0d0; height: 20px; line-height: 16px; }
.np.a { width: 140px; padding-left: 12px; }
.np.b { width: 50px; padding-left: 8px; }
.np.c { width: 120px; padding-left: 7px; }
.np.d { padding-left: 8px; }
.resize { margin: 0 3px 3px auto; width: 8px; height: 8px; clip-path: polygon(100% 0, 100% 100%, 0 100%); background: repeating-linear-gradient(90deg, #bbb 0 2px, transparent 2px 3px); }

/* Chrome */
.chrome { left: 1200px; right: 6px; top: 0; bottom: 69px; background: #fff; box-shadow: 0 2px 8px #0008; }
.tabs { height: 42px; background: #000; display: flex; align-items: flex-end; color: #fff; flex: none; }
.tab { display: flex; align-items: center; height: 34px; padding-bottom: 1px; }
.tab.old { width: 212px; padding-left: 80px; padding-right: 9px; }
.tab.old span { flex: 1; overflow: hidden; white-space: nowrap; mask-image: linear-gradient(90deg, #000 85%, transparent); }
.tab.on { width: 232px; padding-left: 12px; padding-right: 9px; background: #2d2d2d; border-radius: 8px 8px 0 0; gap: 8px; }
.tab.on span { flex: 1; white-space: nowrap; }
.newtab { height: 34px; padding-left: 16px; }
.tabs .ctl { align-self: flex-start; margin: 8px 17px 0 auto; gap: 34px; }
.omni { height: 36px; flex: none; background: #2d2d2d; color: #e8e8e8; display: flex; align-items: center; gap: 14px; padding-right: 14px; padding-bottom: 1px; --hole: #2d2d2d; }
.pill { flex: 1; height: 28px; background: #3c3c3c; border-radius: 0 14px 14px 0; display: flex; align-items: center; gap: 16px; padding: 0 10px 0 73px; font-size: 14px; color: #b0b0b0; }
.pill span { flex: 1; }
.marks { height: 33px; flex: none; background: #2d2d2d; border-bottom: 1px solid #555; color: #fff; display: flex; align-items: center; padding: 0 18px 4px 80px; --hole: #2d2d2d; gap: 17px; }
.marks a { display: flex; align-items: center; gap: 8px; white-space: nowrap; }
.m1 { width: 120px; }
.ph { width: 16px; height: 16px; background: #ccc; color: #888; font-size: 4px; font-style: normal; line-height: 18px; text-align: center; }
.more { margin-left: auto; font-size: 16px; }
.drive { flex: 1; display: flex; flex-direction: column; color: #5f6368; }
.d-head { height: 64px; flex: none; border-bottom: 1px solid #dadce0; display: flex; align-items: center; gap: 22px; padding-bottom: 1px; overflow: hidden; }
.d-search { flex: 1; height: 48px; background: #f1f3f4; border-radius: 0 8px 8px 0; display: flex; align-items: center; padding: 0 19px 0 67px; font-size: 17px; }
.d-search input { flex: 1; height: 26px; color: #777; }
.d-search input::placeholder { color: #80868b; opacity: 1; }
.me { margin-right: -8px; }
.d-body { flex: 1; display: flex; min-height: 0; }
.d-main { flex: 1; display: flex; flex-direction: column; border-right: 1px solid #dadce0; }
.crumbs { height: 48px; flex: none; border-bottom: 1px solid #dadce0; display: flex; align-items: center; padding: 0 25px 0 83px; font-size: 18px; }
.sep { margin: 0 13px; }
.c1 { color: #222; font-size: 15px; }
.car { margin-left: 8px; color: #888; }
.lst { margin: 0 28px 0 auto; }
.d-canvas { flex: 1; position: relative; overflow: hidden; }
.blob { position: absolute; width: 420px; height: 420px; right: 136px; top: 157px; border-radius: 50%; background: #f4f4f4; }
.side { width: 29px; overflow: hidden; display: flex; flex-direction: column; align-items: flex-start; padding: 18px 0 24px 18px; gap: 36px; }
.side hr { width: 12px; border: 0; border-top: 1px solid #dadce0; margin: 0; }
.side .hide { margin-top: auto; margin-left: 2px; }
.hbar { height: 14px; flex: none; background: #f1f1f1; border-top: 1px solid #ccc; padding: 1px 26px 1px 0; }
.hbar i { display: block; height: 11px; background: #c1c1c1; border: 1px solid #a8a8a8; }
.edge-strip { position: absolute; right: 0; top: 0; width: 6px; bottom: 69px; border-left: 1px solid #888; background: linear-gradient(#e8e8e8 0 640px, #45494c 640px); }

/* Explorer */
.explorer { left: 1200px; right: 246px; top: 253px; height: 513px; background: #202020; border: 1px solid #777; color: #fff; box-shadow: 0 3px 14px #0008; font-size: 13px; }
.x-title { height: 30px; background: #2b2b2b; display: flex; padding-bottom: 1px; }
.x-title .ctl { margin-right: 17px; }
.x-menu { height: 25px; background: #000; border-bottom: 1px solid #333; display: flex; align-items: center; justify-content: flex-end; gap: 9px; padding-right: 3px; color: #ccc; }
.x-ribbon { height: 96px; display: flex; padding-top: 2px; border-bottom: 1px solid #333; }
.x-col { height: 77px; border-right: 1px solid #444; }
.x-col.open { width: 130px; display: flex; flex-direction: column; align-items: flex-end; padding: 5px 10px 0 0; gap: 6px; }
.x-col.open span { display: flex; align-items: center; gap: 6px; }
.x-col.open .off { margin-right: 24px; color: #999; }
.x-col.open .off:first-child { margin-right: 13px; }
.x-col.sel { width: 117px; padding: 4px 0 0 7px; display: flex; flex-direction: column; gap: 6px; }
.x-col.sel button { gap: 4px; }
.x-col em { font-style: normal; color: #bbb; align-self: center; margin: 4px 8px 0 0; }
.x-addr { height: 44px; flex: none; background: #191919; display: flex; align-items: center; gap: 12px; padding: 0 12px 0 0; color: #8a8a8a; }
.x-path { width: 136px; height: 30px; border: 1px solid #535353; display: flex; align-items: center; justify-content: flex-end; gap: 18px; padding-right: 8px; }
.x-search { flex: 1; height: 30px; border: 1px solid #535353; display: flex; align-items: center; gap: 12px; padding: 0 0 1px 14px; }
.x-search input { flex: 1; height: 22px; }
.x-search input::placeholder { color: #777; opacity: 1; }
.x-table { border-collapse: collapse; table-layout: fixed; width: 100%; color: #ddd; }
.x-table th { height: 25px; font-weight: 400; text-align: left; border-right: 1px solid #636363; padding: 0 0 2px 6px; }
.x-table th:last-child { border: 0; }
.x-table td { height: 30px; padding: 0 0 0 6px; }
.t0 { width: 97px; } .t1 { width: 120px; } .t2 { width: 80px; } .t3 { width: 88px; }
.x-table .num { text-align: right; padding-right: 7px; font-size: 12px; }
.x-status { margin-top: auto; height: 23px; flex: none; background: #333; display: flex; justify-content: flex-end; padding-right: 4px; }
.x-status span { width: 22px; display: flex; align-items: center; justify-content: center; }
.x-status .on { background: #666; border: 1px solid #888; }

/* Zoom window */
.zoom { left: 18px; right: 642px; top: 0; bottom: 1px; background: #fff; box-shadow: 0 0 14px #000a; border-right: 1px solid #555; overflow: visible; }
.z-title { height: 30px; flex: none; display: flex; align-items: center; gap: 6px; padding: 0 17px 2px 9px; font-size: 13px; color: #111; }
.z-title .ctl { gap: 34px; }
.z-body { flex: 1; display: flex; min-height: 0; }
.meeting { flex: 1; min-width: 0; background: #1a1a1a; position: relative; display: flex; flex-direction: column; color: #fff; }
.gallery { height: 93px; flex: none; padding: 3px 0 0 145px; display: flex; gap: 3px; }
.tile { width: 160px; background: #222; display: flex; flex-direction: column; align-items: center; }
.tile strong { flex: 1; padding-top: 32px; line-height: 22px; font-size: 16px; font-weight: 500; }
.tag { align-self: flex-start; height: 20px; line-height: 18px; font-size: 14px; background: #2c2c2c; padding: 0 4px 2px; display: flex; align-items: center; gap: 5px; }
.next { width: 32px; height: 32px; border-radius: 50%; border: 3px solid #fff; background: #0e72ed; margin: 29px 0 0 11px; display: flex; align-items: center; justify-content: center; }
.view { position: absolute; right: 9px; top: 8px; width: 51px; height: 26px; background: #222; border-radius: 8px; display: flex; align-items: center; justify-content: center; gap: 4px; font-size: 13px; padding-bottom: 2px; }
.secure { position: absolute; left: 8px; top: 104px; width: 24px; height: 24px; background: #222; border-radius: 5px; display: flex; align-items: center; justify-content: center; }
.share { margin-top: 168px; flex: none; display: flex; flex-direction: column; }
.s-top { display: flex; height: 503px; background: #060505; }
.browser { flex: 1; min-width: 0; display: flex; flex-direction: column; background: #fff; font-size: 9px; line-height: 12px; color: #5f6368; }
.b-tabs { height: 26px; flex: none; background: #e8e7ed; display: flex; align-items: center; padding: 0 11px 0 6px; gap: 10px; border-top: 1px solid #ccc; }
.b-tab { align-self: flex-end; width: 146px; height: 20px; background: #fff; border-radius: 5px 5px 0 0; display: flex; align-items: center; gap: 5px; padding: 0 6px 0 7px; }
.b-tab span { flex: 1; white-space: nowrap; }
.b-tabs .ctl { gap: 20px; color: #999; align-self: flex-start; margin-top: 5px; }
.b-omni { height: 23px; flex: none; display: flex; align-items: center; gap: 10px; padding: 0 8px 0 9px; }
.pale { color: #bbb; }
.b-pill { flex: 1; min-width: 0; height: 17px; background: #f1f3f4; border-radius: 9px; display: flex; align-items: center; gap: 5px; padding: 0 7px; white-space: nowrap; }
.b-pill .icon ~ .icon { margin-left: 5px; }
.url { flex: 1; min-width: 0; overflow: hidden; color: #444; font-size: 8px; }
.pdfbar { height: 34px; flex: none; background: #323639; color: #f1f1f1; display: flex; align-items: center; font-size: 9px; font-family: Roboto, "Noto Sans CJK KR", sans-serif; }
.pl { width: 362px; display: flex; align-items: center; gap: 16px; padding-left: 16px; }
.pc { display: flex; align-items: center; gap: 9px; }
.pc .box { background: #191b1c; padding: 0 3px; font-weight: 700; margin-right: -5px; }
.pc .icon + .box { margin-right: 0; }
.pc i { width: 1px; height: 9px; margin: 0 1px; background: #5a5d60; }
.pr { margin-left: auto; display: flex; gap: 15px; padding-right: 16px; }
.page { flex: 1; min-height: 0; position: relative; overflow: hidden; display: flex; justify-content: space-between; }
article { margin-left: 103px; padding-top: 9px; width: 636px; color: #161616; font: 21px/26px "Liberation Serif", serif; }
article p { margin: 0; white-space: nowrap; }
article .j { text-align-last: justify; }
article a { color: #1c9bc9; }
article h2 { margin: 0 0 13px; font: 700 21px/26px "Noto Sans CJK KR", sans-serif; color: #6d6e71; }
article h2.second { margin: 27px 0 13px; }
article pre { margin: 10px 0 12px 30px; font: 14px/20px "Liberation Mono", monospace; }
mark { background: #99bcd9; color: inherit; padding: 2px 0; }
.vbar { width: 9px; background: #f1f1f3; display: flex; flex-direction: column; align-items: center; color: #555; padding: 2px 0; }
.vbar i { width: 9px; height: 10px; background: #bbb; margin: 291px 0 auto; }
.watermark { position: absolute; right: 11px; bottom: 12px; display: flex; flex-direction: column; color: #b4b4b4; width: 198px; white-space: nowrap; font-size: 9px; line-height: 14px; }
.watermark b { font-weight: 400; font-size: 13px; line-height: 18px; }
.ink { position: absolute; left: 605px; top: 92px; }
.cursor { position: absolute; left: 742px; top: 38px; }
.b-h { height: 9px; flex: none; display: flex; align-items: center; background: #f1f1f3; color: #555; padding-right: 9px; gap: 2px; }
.b-h .icon:first-child { margin: 0 9px 0 2px; }
.b-h i { width: 692px; height: 9px; background: #bbb; margin-right: auto; }
.inkcol { width: 24px; padding-right: 2px; position: relative; display: flex; flex-direction: column; align-items: flex-end; }
.bracket { position: absolute; left: 0; top: 21px; width: 13px; height: 96px; border: 2px solid #eee; border-left: 0; border-bottom: 0; border-radius: 0 5px 0 0; }
.nib { position: relative; margin: 117px 0 5px; }
.tools { width: 16px; background: #fff; display: flex; flex-direction: column; }
.tools span { height: 15px; display: flex; align-items: center; justify-content: center; }
.tools .lit { background: #36bdea; }
.palette { display: grid; grid-template: 7px 7px / 1fr 1fr; height: 27px; background: #ff0a84; }
.cy { background: #00aeef; } .ye { background: #ffee00; } .bk { background: #000; }
.s-task { height: 25px; background: #1d1c20; display: flex; align-items: center; color: #e5e5e5; font-size: 9px; line-height: 11px; }
.start { margin: 0 9px 0 10px; }
.s-search { width: 210px; flex: none; height: 24px; background: #f2f2f2; color: #444; display: flex; align-items: center; gap: 7px; padding-left: 8px; font-size: 10px; }
.s-search input { flex: 1; height: 16px; }
.s-search input::placeholder { color: #555; opacity: 1; }
.s-apps { width: 420px; margin-left: 3px; display: flex; justify-content: space-between; }
.s-apps span { width: 24px; height: 25px; display: flex; align-items: center; justify-content: center; border-bottom: 2px solid transparent; --tile: #1d1c20; }
.s-apps .on { border-color: #76b9ed; }
.s-apps b { width: 14px; height: 14px; line-height: 14px; text-align: center; font-size: 8px; border-radius: 2px; }
.ae { background: #00005b; color: #b7b0ff; } .ps { background: #001e36; color: #31a8ff; }
.s-tray { margin-left: auto; display: flex; align-items: center; gap: 4px; padding-right: 14px; }
.s-tray .deg { margin: 0 7px 0 3px; font-size: 10px; }
.s-tray .ime { font-size: 12px; margin-left: 4px; }
.s-tray time { text-align: center; margin: 0 8px 0 3px; font-size: 8px; }

.tip { position: absolute; left: 15px; bottom: 68px; width: 186px; height: 54px; background: #232323; border: 1px solid #333; padding: 13px 0 0 15px; font-size: 13px; }
.tip::after { content: ""; position: absolute; left: 22px; top: 52px; border: 8px solid transparent; border-top-color: #2a2a2a; border-bottom: 0; }
.controls { margin-top: auto; height: 51px; display: flex; align-items: flex-start; padding: 0 12px 0 10px; }
.controls button { display: flex; flex-direction: column; align-items: center; font-size: 13px; line-height: 18px; color: #b0b0b0; white-space: nowrap; }
.ic { height: 28px; display: flex; align-items: center; position: relative; }
.ic sup { position: absolute; left: 28px; top: 3px; font-size: 12px; line-height: 18px; }
.cu { position: absolute; left: 41px; top: 11px; }
.cu.far { left: 60px; }
.w60 { width: 60px; } .w70 { width: 70px; } .w80 { width: 80px; margin-left: 19px; } .w100 { width: 100px; }
.mid { margin: 0 auto; padding-right: 12px; display: flex; gap: 24px; }
.controls .green { color: #23d959; }
.controls .leave { display: block; width: 61px; height: 27px; line-height: 24px; margin-top: 11px; border-radius: 7px; background: #b82626; color: #fff; font-weight: 500; }

/* Chat */
.chat { width: 319px; flex: none; display: flex; flex-direction: column; color: #6e7680; }
.c-head { height: 42px; display: flex; align-items: center; padding: 0 0 1px 18px; }
.c-head h1 { flex: 1; margin: 0 29px 0 0; padding-bottom: 2px; text-align: center; font-size: 13px; font-weight: 500; color: #333; }
.c-msgs { flex: 1; padding: 4px 0 0 21px; }
.from { margin: 1px 0 5px 38px; font-size: 14px; line-height: 16px; }
.from b { font-weight: 400; color: #0e72ed; }
.msg { display: flex; gap: 9px; margin-bottom: 5px; }
.msg p { margin: 0; height: 40px; line-height: 38px; padding: 0 11px; background: #f2f2f7; border-radius: 10px; font-size: 16px; color: #444b53; }
.av { width: 29px; height: 29px; margin-top: 2px; border-radius: 7px; background: #2980b9; color: #fff; text-align: center; line-height: 27px; font-size: 12px; }
.av.none { background: none; }
.who { height: 25px; background: #f7f7fb; border-bottom: 1px solid #e9e9f0; display: flex; align-items: center; justify-content: center; gap: 5px; padding-bottom: 1px; font-size: 13px; white-space: nowrap; }
.to { height: 24px; margin-top: 12px; display: flex; align-items: center; padding: 0 19px 0 18px; color: #444; }
.to label { font-size: 13px; width: 47px; }
.selwrap { display: flex; align-items: center; width: 71px; height: 23px; background: #f2f2f7; border-radius: 6px; padding: 0 7px; color: #222; position: relative; }
.selwrap select { appearance: none; flex: 1; min-width: 0; font-size: 12px; }
.c-ic { margin-left: auto; display: flex; align-items: center; gap: 9px; color: #747487; }
.chat textarea { height: 82px; margin: 4px 18px 0; resize: none; font-size: 14px; line-height: 18px; }
.chat textarea::placeholder { color: #747487; opacity: 1; }

.banner { position: absolute; left: 498px; top: -1px; height: 22px; display: flex; border-radius: 0 0 4px 4px; overflow: hidden; background: #23d959; color: #20502e; font-size: 13px; line-height: 20px; }
.banner span { width: 195px; text-align: center; white-space: nowrap; }
.banner button { width: 99px; background: #222327; color: #fff; display: flex; align-items: center; justify-content: center; gap: 6px; padding-left: 18px; font-size: 12px; font-weight: 500; }

/* Taskbar */
.taskbar { height: 40px; flex: none; background: #212121; display: flex; align-items: stretch; color: #f0f0f0; font-size: 13px; }
.startbtn { width: 48px; justify-content: center; }
.t-search { width: 344px; background: #464646; border: 1px solid #6c6c6c; display: flex; align-items: center; gap: 12px; padding: 0 0 1px 11px; font-size: 16px; }
.t-search input { flex: 1; height: 34px; }
.t-search input::placeholder { color: #d8d8d8; opacity: 1; }
.t-apps { display: flex; gap: 1px; margin-left: 1px; }
.app { width: 48px; display: flex; align-items: center; justify-content: center; position: relative; }
.app.on::after, .app.alert::after, .app.active::after { content: ""; position: absolute; left: 4px; right: 4px; bottom: 0; height: 2px; background: #b5b5ae; }
.app.alert { background: #99521c; }
.app.active { background: #3a3937; }
.app.alert::after { left: 0; right: 0; background: #ff7a00; }
.app.active::after { left: 0; right: 0; }
.tray { margin-left: auto; display: flex; align-items: center; gap: 7px; padding-right: 24px; }
.tray .deg { margin: 0 9px 0 3px; font-size: 15px; }
.tray .ime { font-size: 16px; margin: 0 5px 0 4px; }
.tray time { text-align: center; font-size: 12px; line-height: 18px; width: 68px; margin-right: 11px; }
.notes { position: relative; }
.notes i { position: absolute; left: 8px; top: 10px; width: 15px; height: 15px; border: 1px solid #aaa; border-radius: 50%; background: #333; font-size: 11px; line-height: 13px; font-style: normal; text-align: center; }
</style>
